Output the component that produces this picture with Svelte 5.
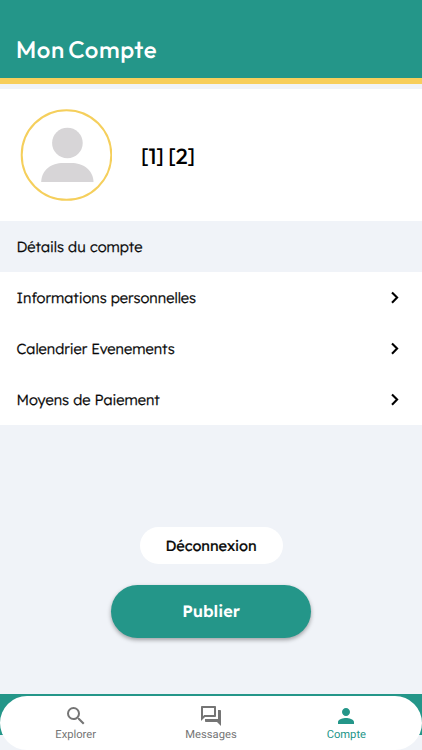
<script>
  let activeTab = 'compte';

  const rows = [
    { label: 'Informations personnelles', id: 'infos' },
    { label: 'Calendrier Evenements', id: 'calendrier' },
    { label: 'Moyens de Paiement', id: 'paiement' }
  ];

  const tabs = [
    {
      id: 'explorer',
      label: 'Explorer',
      icon: 'M15.5 14h-.79l-.28-.27A6.47 6.47 0 0 0 16 9.5 6.5 6.5 0 1 0 9.5 16c1.61 0 3.09-.59 4.23-1.57l.27.28v.79l5 4.99L20.49 19l-4.99-5zm-6 0C7.01 14 5 11.99 5 9.5S7.01 5 9.5 5 14 7.01 14 9.5 11.99 14 9.5 14z'
    },
    {
      id: 'messages',
      label: 'Messages',
      icon: 'M15 4v7H5.17L4 12.17V4h11m1-2H3c-.55 0-1 .45-1 1v14l4-4h10c.55 0 1-.45 1-1V3c0-.55-.45-1-1-1zm5 4h-2v9H6v2c0 .55.45 1 1 1h11l4 4V7c0-.55-.45-1-1-1z'
    },
    {
      id: 'compte',
      label: 'Compte',
      icon: 'M12 12c2.21 0 4-1.79 4-4s-1.79-4-4-4-4 1.79-4 4 1.79 4 4 4zm0 2c-2.67 0-8 1.34-8 4v2h16v-2c0-2.66-5.33-4-8-4z'
    }
  ];
</script>

<div class="screen">
  <header>
    <h1>Mon Compte</h1>
  </header>

  <section class="profile">
    <svg class="avatar" viewBox="0 0 92 92">
      <circle cx="46.5" cy="46" r="44.8" fill="#fff" stroke="#f5cf5c" stroke-width="2" />
      <circle cx="47.4" cy="34" r="15.3" fill="#d7d5d7" />
      <path d="M21.2 73c.3-12 10-19 22-19h8c12 0 22 7 22.3 19z" fill="#d7d5d7" />
    </svg>
    <span class="name">[1] [2]</span>
  </section>

  <h2>Détails du compte</h2>

  <div class="list">
    {#each rows as row}
      <a class="row" href="#{row.id}">
        <span>{row.label}</span>
        <svg class="chevron" viewBox="0 0 10 14">
          <path d="M2 1.5l5.1 5.1L2 11.7" fill="none" stroke="#000" stroke-width="2.1" />
        </svg>
      </a>
    {/each}
  </div>

  <div class="actions">
    <button class="logout">Déconnexion</button>
    <button class="publish">Publier</button>
  </div>

  <div class="tabbar">
    <nav>
      {#each tabs as tab}
        <button class="tab" class:active={tab.id === activeTab} on:click={() => (activeTab = tab.id)}>
          <svg viewBox="0 0 24 24"><path d={tab.icon} fill="currentColor" /></svg>
          <span>{tab.label}</span>
        </button>
      {/each}
    </nav>
  </div>
</div>

<style>
  :global(body) { background: #f0f3f8; }

  .screen {
    background: #f0f3f8;
    box-sizing: border-box;
    color: #080808;
    display: flex;
    flex-direction: column;
    font-family: Lexend, "Noto Sans", sans-serif;
    height: 750px;
    overflow: hidden;
    text-rendering: geometricPrecision;
    width: 422px;
  }

  header {
    align-items: flex-end;
    background: #249689;
    border-bottom: 6px solid #f7ce5b;
    box-sizing: border-box;
    display: flex;
    flex: none;
    height: 84px;
    margin-bottom: 5px;
    padding: 0 16px 12px;
  }

  h1 {
    color: #fff;
    font: 500 24px/32px Outfit, Inter, sans-serif;
    letter-spacing: .6px;
    margin: 0;
    word-spacing: -2px;
  }

  .profile {
    align-items: center;
    background: #fff;
    display: flex;
    flex: none;
    height: 132px;
    padding-left: 20px;
  }

  .avatar {
    height: 92px;
    width: 92px;
  }

  .name {
    color: #000;
    font: 500 22px/28px Outfit, Inter, sans-serif;
    margin: 2px 0 0 29px;
  }

  h2,
  .row {
    -webkit-text-stroke: .25px #080808;
    font-size: 14.6px;
    font-weight: 300;
    height: 51px;
  }

  h2 {
    flex: none;
    line-height: 51px;
    margin: 0;
    padding-left: 16.5px;
  }

  .list {
    background: #fff;
    flex: none;
  }

  .row {
    align-items: center;
    color: inherit;
    display: flex;
    justify-content: space-between;
    padding: 0 22.5px 0 16.5px;
    text-decoration: none;
  }

  .chevron {
    height: 14px;
    width: 10px;
  }

  button {
    border: 0;
    cursor: pointer;
    font-family: inherit;
    padding: 0;
    text-rendering: inherit;
  }

  .actions {
    align-items: center;
    display: flex;
    flex: 1;
    flex-direction: column;
    gap: 21px;
    padding-top: 102px;
  }

  .logout {
    -webkit-text-stroke: .2px #080808;
    background: #fff;
    border-radius: 19px;
    color: #080808;
    font-size: 14.6px;
    font-weight: 400;
    height: 37px;
    letter-spacing: -.1px;
    width: 143px;
  }

  .publish {
    background: #249689;
    border-radius: 27px;
    box-shadow: 0 2px 4px rgba(0, 0, 0, .35);
    color: #fff;
    font-size: 16.3px;
    font-weight: 600;
    height: 53px;
    width: 200px;
  }

  .tabbar {
    background: linear-gradient(#249689 41px, #f0f3f8 41px);
    flex: none;
    height: 54px;
    padding-top: 2px;
  }

  nav {
    background: #fff;
    border-radius: 27px;
    display: flex;
    height: 54px;
    padding: 0 8px;
  }

  .tab {
    align-items: center;
    background: none;
    color: #757575;
    display: flex;
    flex: 1;
    flex-direction: column;
    font: 11.2px/14px Roboto, sans-serif;
    padding-top: 8px;
  }

  .tab svg {
    height: 24px;
    width: 24px;
  }

  .tab.active { color: #249689; }
</style>
